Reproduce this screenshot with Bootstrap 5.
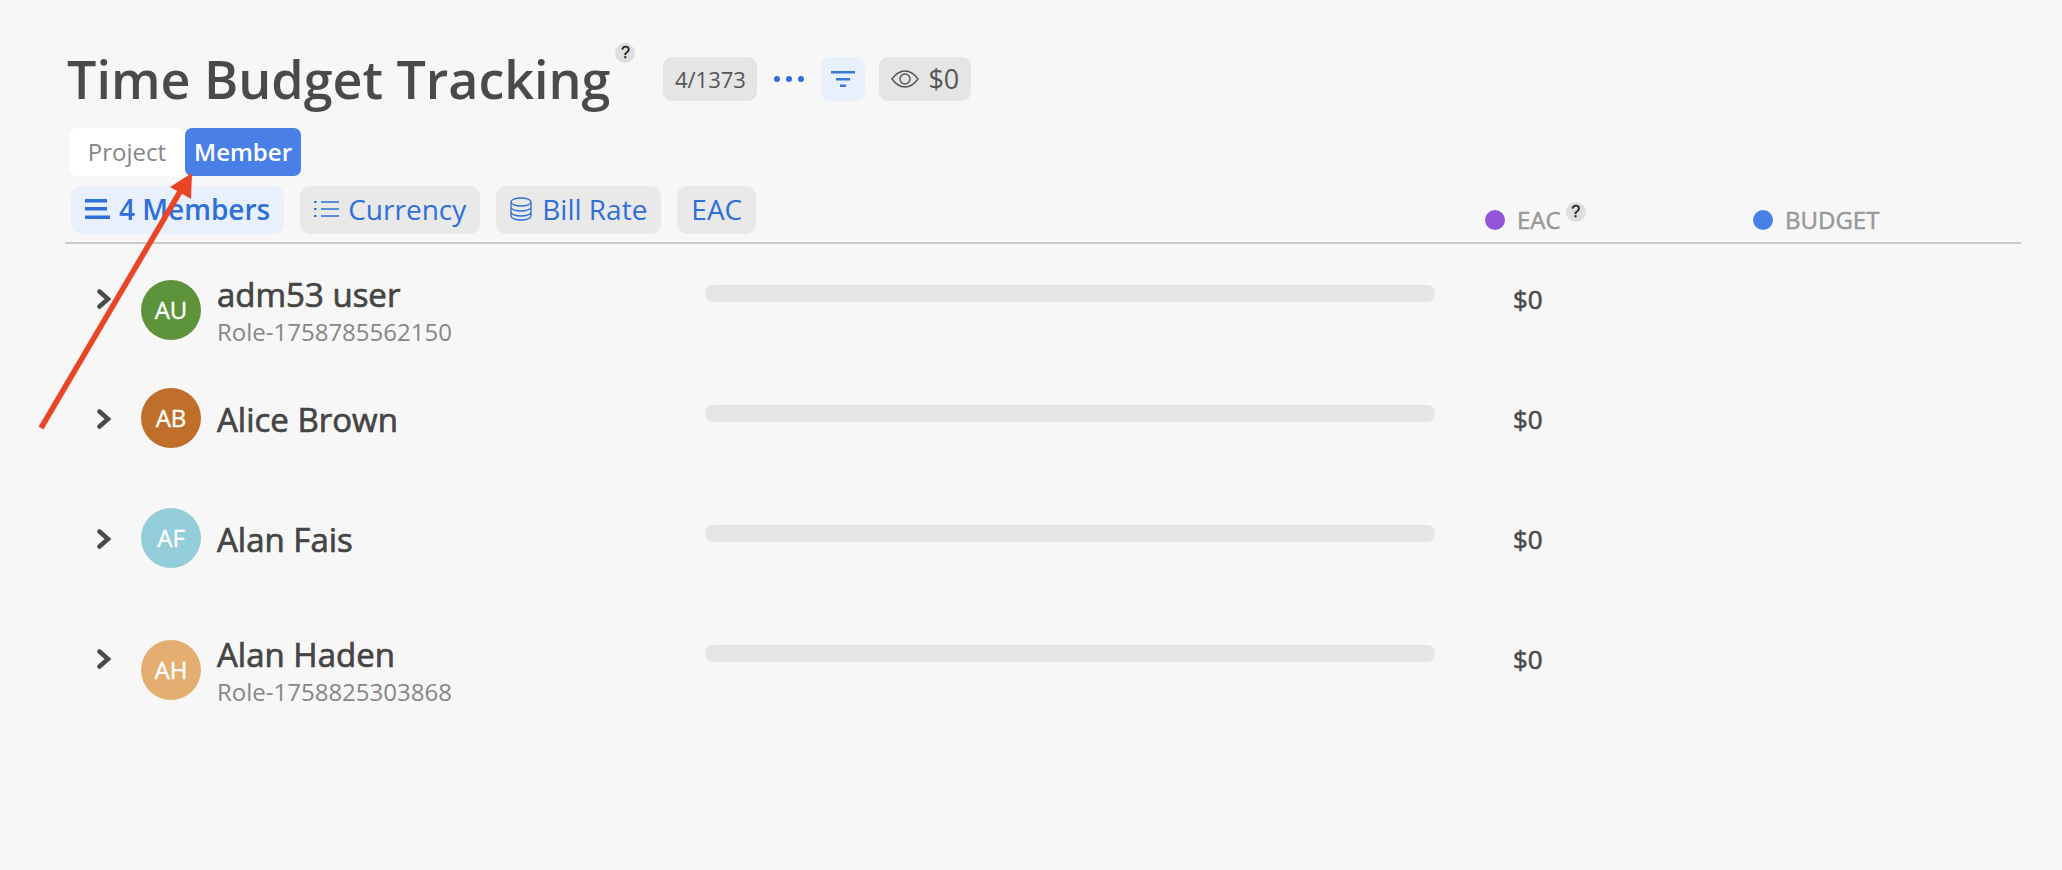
<!DOCTYPE html>
<html lang="en">
<head>
    <meta charset="UTF-8">
    <meta name="viewport" content="width=device-width, initial-scale=1.0">
    <title>Time Budget Tracking</title>
    <link href="https://cdn.jsdelivr.net/npm/bootstrap@5.3.0/dist/css/bootstrap.min.css" rel="stylesheet">
    <style>
        body { background: #f7f7f7; font-family: "Open Sans", "Noto Sans", sans-serif; color: #4a4a4a; min-height: 870px; position: relative; overflow: hidden; }
        .page-wrap { padding: 44px 41px 0 65px; }
        .title-row { height: 70px; margin-bottom: 14px; }
        .page-title { font-size: 52px; font-weight: 600; line-height: 70px; margin: 0 0 0 2px; color: #4a4a4a; }
        .help-dot { width: 20px; height: 20px; border-radius: 50%; background: #dedede; color: #111; font: 400 16px/20px "Liberation Sans", sans-serif; -webkit-text-stroke: 0.3px #111; text-align: center; flex: none; }
        .title-help { align-self: flex-start; margin: -1px 0 0 5px; }
        .stat-box { height: 44px; border-radius: 9px; background: #e5e5e5; font-size: 22px; color: #555; padding: 0 12px; }
        .count-box { margin-left: 28px; padding: 0 11.500px; }
        .dots-box { width: 64px; height: 44px; }
        .filter-box { width: 44px; height: 44px; border-radius: 9px; background: #e8f1fb; margin-right: 14px; }
        .eye-box { gap: 9px; }
        .cost-text { font-size: 27px; }
        .tab-btn { width: 116px; height: 48px; border-radius: 7px; font-size: 24px; line-height: 48px; text-align: center; }
        .tab-off { background: #fff; color: #868686; margin-left: 4px; }
        .tab-on { background: #4a7fe8; color: #fff; font-weight: 600; }
        .head-row { border-bottom: 2px solid #cbcbcb; margin-top: 10px; height: 58px; }
        .chips-col { width: 1420px; padding-left: 6px; gap: 16px; }
        .chip-item { height: 48px; border-radius: 10px; background: #e9e9e9; color: #2e6fd9; font-size: 28px; padding: 0 14px 2px; gap: 10px; }
        .chip-on { background: #e8f1fb; font-weight: 600; gap: 9px; }
        .chip-tight { gap: 9px; }
        .legend-col { width: 268px; padding-top: 20px; gap: 12px; font-size: 24px; color: #999; line-height: 28px; -webkit-text-stroke: 0.5px #999; }
        .legend-dot { width: 20px; height: 20px; border-radius: 50%; flex: none; }
        .legend-help { margin: -16px 0 0 -7px; }
        .member-row { height: 120px; }
        .chev-col { width: 76px; padding: 45px 0 0 32px; flex: none; }
        .who-col { width: 564px; flex: none; padding-top: 24px; }
        .face { width: 60px; height: 60px; border-radius: 50%; color: #fff; font-size: 24px; line-height: 60px; -webkit-text-stroke: 0.35px #fff; text-align: center; flex: none; margin-right: 16px; }
        .who-name { font-size: 33px; line-height: 36px; color: #454545; -webkit-text-stroke: 0.7px #454545; }
        .no-role { padding-top: 4px; }
        .who-role { font-size: 24px; line-height: 28px; color: #868686; margin-top: 5px; }
        .has-role { padding: 9px 0 6px; }
        .bar-col { width: 730px; flex: none; padding-top: 41px; }
        .bar-track { height: 17px; border-radius: 8px; background: #e5e5e5; }
        .cost-col { margin-left: 78px; padding-top: 38px; font-size: 26px; line-height: 34px; color: #4a4a4a; -webkit-text-stroke: 0.6px #4a4a4a; }
        .note-arrow { position: absolute; left: 0; top: 0; pointer-events: none; }
    </style>
</head>
<body>
    <div class="page-wrap">
        <div class="title-row d-flex align-items-center">
            <h1 class="page-title">Time Budget Tracking</h1>
            <div class="help-dot title-help">?</div>
            <div class="stat-box count-box d-flex align-items-center">4/1373</div>
            <div class="dots-box d-flex align-items-center justify-content-center">
                <svg width="30" height="6" viewBox="0 0 30 6"><g fill="#2e6fd9"><circle cx="3" cy="3" r="3"/><circle cx="15" cy="3" r="3"/><circle cx="27" cy="3" r="3"/></g></svg>
            </div>
            <div class="filter-box d-flex align-items-center justify-content-center">
                <svg width="24" height="16" viewBox="0 0 24 16"><g fill="#3a78dc"><rect width="24" height="2.5"/><rect x="5" y="7" width="14" height="2.5"/><rect x="9" y="13.5" width="6" height="2.5"/></g></svg>
            </div>
            <div class="stat-box eye-box d-flex align-items-center">
                <svg width="28" height="18" viewBox="0 0 28 18" fill="none" stroke="#555" stroke-width="1.4"><path d="M1 9C5 3.500 9 1 14 1s9 2.500 13 8c-4 5.500-8 8-13 8S5 14.500 1 9z"/><circle cx="14" cy="9" r="5"/></svg>
                <span class="cost-text">$0</span>
            </div>
        </div>
        <div class="d-flex">
            <div class="tab-btn tab-off">Project</div>
            <div class="tab-btn tab-on">Member</div>
        </div>
        <div class="head-row d-flex align-items-start">
            <div class="chips-col d-flex">
                <div class="chip-item chip-on d-flex align-items-center">
                    <svg width="25" height="20" viewBox="0 0 25 20"><g fill="#2e6fd9"><rect width="22" height="3.500"/><rect y="8" width="22" height="3.500"/><rect y="16.500" width="25" height="3.500"/></g></svg>
                    <span>4 Members</span>
                </div>
                <div class="chip-item chip-tight d-flex align-items-center">
                    <svg width="25" height="20" viewBox="0 0 25 20" fill="none" stroke="#2e6fd9" stroke-width="1.6"><path d="M7 3h18M7 10h18M7 17h18"/><path d="M0 3h2.500M0 10h2.500M0 17h2.500" stroke-width="2"/></svg>
                    <span>Currency</span>
                </div>
                <div class="chip-item d-flex align-items-center">
                    <svg width="22" height="24" viewBox="0 0 22 24" fill="none" stroke="#2e6fd9" stroke-width="1.300"><ellipse cx="11" cy="5" rx="10" ry="4"/><path d="M1 5v14c0 2.200 4.500 4 10 4s10-1.800 10-4V5M1 10c0 2.200 4.500 4 10 4s10-1.800 10-4M1 15c0 2.200 4.500 4 10 4s10-1.800 10-4"/></svg>
                    <span>Bill Rate</span>
                </div>
                <div class="chip-item d-flex align-items-center">EAC</div>
            </div>
            <div class="legend-col d-flex align-items-center">
                <span class="legend-dot d-block" style="background:#9254d8"></span>
                <span>EAC</span>
                <div class="help-dot legend-help">?</div>
            </div>
            <div class="legend-col d-flex align-items-center">
                <span class="legend-dot d-block" style="background:#4a7fe8"></span>
                <span>BUDGET</span>
            </div>
        </div>

        <div id="memberList"></div>
    </div>

    <svg class="note-arrow" width="260" height="440" viewBox="0 0 260 440">
        <path d="M41 428L181 190" stroke="#ea4426" stroke-width="5.500" fill="none"/>
        <path d="M192 173L170 187L191 199z" fill="#ea4426"/>
    </svg>

    <script src="https://cdn.jsdelivr.net/npm/bootstrap@5.3.0/dist/js/bootstrap.bundle.min.js"></script>
    <script>
document.addEventListener('DOMContentLoaded', () => {
    const members = [
        { initials: 'AU', name: 'adm53 user', role: 'Role-1758785562150', color: '#5d943b' },
        { initials: 'AB', name: 'Alice Brown', role: '', color: '#c06f2b' },
        { initials: 'AF', name: 'Alan Fais', role: '', color: '#93cdda' },
        { initials: 'AH', name: 'Alan Haden', role: 'Role-1758825303868', color: '#e4ae70' },
    ];

    document.getElementById('memberList').innerHTML = members.map(m => `
        <div class="member-row d-flex align-items-start">
            <div class="chev-col">
                <svg class="d-block" width="15" height="20" viewBox="0 0 15 20" fill="none" stroke="#4a4a4a" stroke-width="4.500" stroke-linecap="round" stroke-linejoin="miter"><path d="M2.500 2.500L11 10L2.500 17.500"/></svg>
            </div>
            <div class="who-col d-flex align-items-center">
                <div class="face" style="background:${m.color}">${m.initials}</div>
                <div class="${m.role ? 'has-role' : 'no-role'}">
                    <div class="who-name">${m.name}</div>
                    ${m.role ? `<div class="who-role">${m.role}</div>` : ''}
                </div>
            </div>
            <div class="bar-col"><div class="bar-track"></div></div>
            <div class="cost-col">$0</div>
        </div>
    `).join('');
});
</script>
</body>
</html>
